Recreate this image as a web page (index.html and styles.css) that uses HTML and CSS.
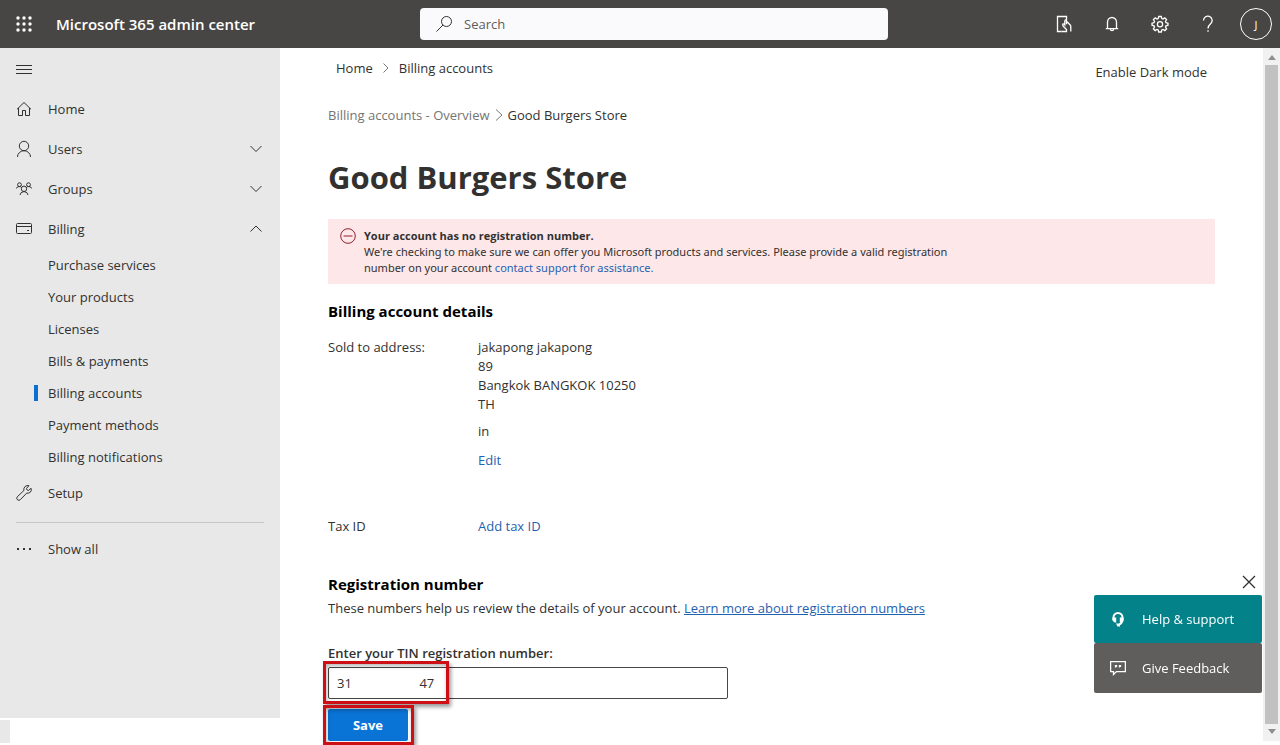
FILE: index.html
```html
<!DOCTYPE html>
<html lang="en">
<head>
<meta charset="utf-8">
<meta name="viewport" content="width=device-width, initial-scale=1">
<title>Good Burgers Store - Microsoft 365 admin center</title>
<link rel="stylesheet" href="styles.css">
</head>
<body>
<header class="topbar">
  <div class="brand">
    <button class="icon-button" aria-label="App launcher">
      <svg width="16" height="16" viewBox="0 0 16 16" fill="currentColor"><circle cx="2" cy="2" r="1.700"/><circle cx="8" cy="2" r="1.700"/><circle cx="14" cy="2" r="1.700"/><circle cx="2" cy="8" r="1.700"/><circle cx="8" cy="8" r="1.700"/><circle cx="14" cy="8" r="1.700"/><circle cx="2" cy="14" r="1.700"/><circle cx="8" cy="14" r="1.700"/><circle cx="14" cy="14" r="1.700"/></svg>
    </button>
    <a class="brand-name" href="#">Microsoft 365 admin center</a>
  </div>
  <label class="search">
    <svg width="16" height="16" viewBox="0 0 16 16" class="line"><circle cx="10.5" cy="5.5" r="5"/><path d="M7 9 0.5 15.5"/></svg>
    <input type="search" placeholder="Search" aria-label="Search">
  </label>
  <div class="tools">
    <button class="icon-button" aria-label="Setup guides">
      <svg width="16" height="18" viewBox="0 0 16 18" class="line bold"><path d="M5.500 16.500H1.500V1.500H10.500V5"/><path d="M5.500 16.500h5v-2L7.500 11.500Q6.300 10 6.800 9q1-.6 2 .8V6q.1-1.200.9-1.200t.8 1.200v3.200M10.500 6.200l3.500 3.500q.8.800.8 2V16.500"/></svg>
    </button>
    <button class="icon-button" aria-label="Notifications">
      <svg width="16" height="16" viewBox="0 0 16 16" class="line bold"><path d="M3.500 12.500V6a4.500 4.500 0 0 1 9 0v6.500M1.800 12.600h12.400M6.300 13q.2 1.700 1.700 1.700T9.700 13"/></svg>
    </button>
    <button class="icon-button" aria-label="Settings">
      <svg width="18" height="18" viewBox="0 0 18 18" class="line bold"><path d="M7.700 1.500h2.600l.5 2 1.200.5 1.800-1.100 1.800 1.800L14.500 6.500l.5 1.200 2 .5v2l-2 .6-.5 1.200 1.100 1.800-1.800 1.800-1.800-1.100-1.200.5-.5 2H7.700l-.5-2-1.200-.5-1.800 1.100-1.800-1.800L3.500 12 3 10.800l-2-.6v-2l2-.5.5-1.200L2.400 4.700l1.800-1.800L6 4l1.200-.5z"/><circle cx="9" cy="9.200" r="2.600"/></svg>
    </button>
    <button class="icon-button" aria-label="Help">
      <svg width="12" height="18" viewBox="0 0 12 18" class="line bold"><path d="M1.500 5.500a4.300 4.300 0 1 1 7.500 2.800Q6 11 6 13.500M6 15.300v1.500"/></svg>
    </button>
    <button class="icon-button" aria-label="Account manager"><span class="avatar">J</span></button>
  </div>
</header>

<div class="shell">
  <aside class="side">
    <nav class="nav" aria-label="Main">
      <button class="nav-item" aria-label="Collapse navigation"><svg width="16" height="16" viewBox="0 0 16 16" class="line"><path d="M0 4.500h16M0 8.500h16M0 12.500h16"/></svg></button>
      <a class="nav-item" href="#">
        <svg width="16" height="16" viewBox="0 0 16 16" class="line"><path d="M1 8.300 8 1.500l7 6.800M2.500 7v7.500h4v-5h3v5h4V7"/></svg>
        <span>Home</span></a>
      <button class="nav-item" aria-expanded="false">
        <svg width="16" height="18" viewBox="0 0 16 18" class="line"><circle cx="8" cy="6" r="4.700"/><path d="M1.500 17a6.500 6.300 0 0 1 13 0"/></svg>
        <span>Users</span>
        <svg class="chevron line" width="12" height="8" viewBox="0 0 12 8"><path d="M.5 1 6 6.500 11.500 1"/></svg></button>
      <button class="nav-item" aria-expanded="false">
        <svg width="16" height="14" viewBox="0 0 16 14" class="line"><circle cx="3.500" cy="2.700" r="1.900"/><circle cx="12.500" cy="2.700" r="1.900"/><circle cx="8" cy="6.800" r="2.700"/><path d="M.3 6.500q.5-2 3-2 1.700 0 2.300 1M15.700 6.500q-.5-2-3-2-1.700 0-2.300 1M4 13q.3-3.200 4-3.400 3.700.2 4 3.400"/></svg>
        <span>Groups</span>
        <svg class="chevron line" width="12" height="8" viewBox="0 0 12 8"><path d="M.5 1 6 6.500 11.500 1"/></svg></button>
      <button class="nav-item" aria-expanded="true">
        <svg width="16" height="14" viewBox="0 0 16 14" class="line"><rect x=".5" y="1.500" width="15" height="10" rx="1"/><path d="M.5 4.500h15M11 8.500h2"/></svg>
        <span>Billing</span>
        <svg class="chevron line" width="12" height="8" viewBox="0 0 12 8"><path d="M.5 6.500 6 1l5.500 5.500"/></svg></button>
      <a class="sub-item" href="#">Purchase services</a>
      <a class="sub-item" href="#">Your products</a>
      <a class="sub-item" href="#">Licenses</a>
      <a class="sub-item" href="#">Bills &amp; payments</a>
      <a class="sub-item current" href="#" aria-current="page">Billing accounts</a>
      <a class="sub-item" href="#">Payment methods</a>
      <a class="sub-item" href="#">Billing notifications</a>
      <a class="nav-item" href="#">
        <svg width="16" height="16" viewBox="0 0 16 16" class="line"><path d="M15 3.200q1 2.200-.6 3.900-1.500 1.500-3.700 1L4.500 14.500q-1.500 1.500-3 .3-1.600-1.400-.2-3L7.900 5.500Q7.300 3.200 9 1.600q1.600-1.500 4-.9L10.500 3.400l.6 1.600 1.500.5z"/></svg>
        <span>Setup</span></a>
      <hr class="divider">
      <button class="nav-item">
        <svg width="16" height="4" viewBox="0 0 16 4" fill="currentColor"><path d="M1 1h2v2H1zM7 1h2v2H7zM13 1h2v2h-2z"/></svg>
        <span>Show all</span></button>
    </nav>
    <div class="side-corner"></div>
  </aside>

  <main class="content">
    <div class="page-top">
      <nav class="crumbs" aria-label="Breadcrumb">
        <a href="#">Home</a>
        <svg width="6" height="10" viewBox="0 0 6 10" class="line"><path d="M.5.500 5 5 .5 9.500"/></svg>
        <a href="#">Billing accounts</a>
      </nav>
      <button class="dark-mode">Enable Dark mode</button>
    </div>
    <nav class="crumbs account-crumbs" aria-label="Billing account">
      <a class="faded" href="#">Billing accounts - Overview</a>
      <svg width="8" height="12" viewBox="0 0 8 12" class="line"><path d="M1 .5 7 6 1 11.500"/></svg>
      <span>Good Burgers Store</span>
    </nav>
    <h1>Good Burgers Store</h1>

    <section class="alert" role="alert">
      <svg width="16" height="16" viewBox="0 0 16 16" class="line"><circle cx="8" cy="8" r="7.300"/><path d="M3.500 8h9"/></svg>
      <div class="alert-text">
        <strong>Your account has no registration number.</strong>
        <p>We're checking to make sure we can offer you Microsoft products and services. Please provide a valid registration number on your account <a href="#">contact support for assistance.</a></p>
      </div>
    </section>

    <h2>Billing account details</h2>
    <dl class="details">
      <dt>Sold to address:</dt>
      <dd>
        <address>jakapong jakapong<br>89<br>Bangkok BANGKOK 10250<br>TH</address>
        <p>in</p>
        <a href="#">Edit</a>
      </dd>
      <dt>Tax ID</dt>
      <dd><a href="#">Add tax ID</a></dd>
    </dl>

    <h2>Registration number</h2>
    <p class="hint">These numbers help us review the details of your account. <a href="#">Learn more about registration numbers</a></p>

    <form class="tin-form">
      <label for="tin">Enter your TIN registration number:</label>
      <div class="field">
        <input id="tin" type="text" value="31&nbsp;&nbsp;&nbsp;&nbsp;&nbsp;&nbsp;&nbsp;&nbsp;&nbsp;&nbsp;&nbsp;&nbsp;&nbsp;&nbsp;&nbsp;&nbsp;&nbsp;&nbsp;&nbsp;&nbsp;47">
        <span class="mark mark-field"></span>
      </div>
      <div class="save-row">
        <button class="save" type="button">Save</button>
        <span class="mark mark-save"></span>
      </div>
    </form>
  </main>

  <div class="scrollbar" aria-hidden="true">
    <svg width="8" height="5" viewBox="0 0 8 5"><path d="M0 5 4 0l4 5z"/></svg>
    <div class="thumb"></div>
    <svg width="8" height="5" viewBox="0 0 8 5"><path d="M0 0h8L4 5z"/></svg>
  </div>
</div>

<aside class="assist" aria-label="Assistance">
  <button class="close" aria-label="Close"><svg width="14" height="14" viewBox="0 0 14 14" class="line bold"><path d="m1 1 12 12M13 1 1 13"/></svg></button>
  <button class="assist-button support">
    <svg width="16" height="16" viewBox="0 0 16 16"><path fill="none" stroke="currentColor" stroke-width="2" d="M3.500 9V6.500a4.500 4.500 0 0 1 9 0V9q0 2.500-3 4.500"/><path fill="currentColor" d="M2.500 6.500h3.700v5H4.500l-2-2zM9.800 6.500h3.700v3l-2 2H9.800zM6 12.500h4v3H7.500z"/></svg>
    <span>Help &amp; support</span></button>
  <button class="assist-button feedback">
    <svg width="16" height="16" viewBox="0 0 16 16" class="line bold"><path d="M.6 1.600h14.800v10H6.500L3.500 14.500v-2.900H.6z"/><path d="M5.500 5v2.500M6.500 5v2M9.500 5v2.500M10.500 5v2"/></svg>
    <span>Give Feedback</span></button>
</aside>
</body>
</html>
```
FILE: styles.css
```css
* { box-sizing: border-box; }

body {
  margin: 0;
  height: 100vh;
  display: flex;
  flex-direction: column;
  overflow: hidden;
  background: #fff;
  color: #323130;
  font: 13px/20px "Open Sans", "Noto Sans", sans-serif;
}

button, input { font: inherit; color: inherit; }
button { border: 0; padding: 0; background: none; text-align: left; cursor: pointer; }
a { color: inherit; text-decoration: none; }
h1, h2, p, dl, dd { margin: 0; }
svg { flex: none; display: block; }

.line { fill: none; stroke: currentColor; stroke-width: 1; }
.bold { stroke-width: 1.3; }

/* Top bar */
.topbar { flex: none; display: flex; align-items: center; height: 48px; background: #484644; color: #fff; }
.brand { flex: none; display: flex; align-items: center; width: 420px; }
.icon-button { display: flex; align-items: center; justify-content: center; width: 48px; height: 48px; }
.brand-name { padding-left: 8px; font-size: 15px; font-weight: 600; }
.search { flex: 0 1 468px; display: flex; align-items: center; gap: 12px; height: 32px; padding: 0 16px; border-radius: 4px; background: #faf9fb; color: #323130; }
.search input { flex: 1; min-width: 0; padding: 0; border: 0; outline: 0; background: none; }
.search input::placeholder { color: #605e5c; opacity: 1; }
.tools { flex: none; display: flex; margin-left: auto; }
.avatar { width: 32px; height: 32px; border: 1px solid #fff; border-radius: 50%; font-size: 11px; line-height: 32px; text-align: center; }

/* Frame under the top bar */
.shell { flex: 1; min-height: 0; display: flex; }
.side { flex: none; width: 280px; display: flex; flex-direction: column; gap: 2px; padding-bottom: 2px; }
.nav { flex: 1; padding-top: 1px; background: #e8e8e8; }
.side-corner { width: 10px; height: 23px; background: #e8e8e8; }

.nav-item { display: flex; align-items: center; gap: 16px; width: 100%; height: 40px; padding: 0 18px 0 16px; }
.chevron { margin-left: auto; }
.sub-item { display: flex; align-items: center; height: 32px; padding-left: 48px; }
.current::before { content: ""; width: 4px; height: 16px; margin: 0 10px 0 -14px; background: #0b6fd0; }
.divider { height: 1px; margin: 9px 16px 6px; border: 0; background: #c8c6c4; }

/* Page */
.content { flex: 1; min-width: 0; padding: 10px 48px 0 48px; overflow: hidden; }
.page-top { display: flex; align-items: flex-start; justify-content: space-between; padding: 0 8px; }
.dark-mode { margin-top: 4px; }
.crumbs { display: flex; align-items: center; gap: 10px; }
.account-crumbs { gap: 5px; margin-top: 23px; }
.faded { color: #767472; }
.crumbs svg { color: #797775; }

h1 { margin-top: 32px; font-size: 31px; line-height: 40px; font-weight: 700; }
h2 { font-size: 15px; line-height: 24px; font-weight: 700; color: #000; }

.alert { display: flex; gap: 8px; margin: 22px 0 15px; padding: 9px 12px 8px; background: #fde7e9; font-size: 11px; line-height: 16px; }
.alert svg { color: #8e1f2f; }
.alert-text { max-width: 620px; }
.alert p { font-family: "Noto Sans", sans-serif; }
.alert strong { display: block; }
.alert a, .details a, .hint a { color: #1f62b0; }

.details { display: grid; grid-template-columns: 150px 1fr; row-gap: 47px; margin: 15px 0 36px; line-height: 19px; }
.details address { font-style: normal; }
.details p { margin: 8px 0 10px; }
.details a { display: inline-block; }

.hint { margin-top: 3px; line-height: 19px; }
.hint a { text-decoration: underline; }

.tin-form { margin-top: 26px; }
.tin-form label { display: block; line-height: 19px; font-weight: 600; }
.field { position: relative; max-width: 400px; margin-top: 4px; }
.field input { display: block; width: 100%; height: 32px; padding: 0 8px; border: 1px solid #484644; border-radius: 2px; background: #fff; }
.save-row { position: relative; margin-top: 10px; }
.save { display: block; width: 80px; height: 32px; border-radius: 2px; background: #0a74d6; color: #fff; font-weight: 700; text-align: center; }

/* Red callout frames drawn over the form */
.mark { position: absolute; border: 3px solid #cc1016; pointer-events: none; box-shadow: 2px 3px 4px rgba(0, 0, 0, .4), inset 1px 2px 4px rgba(0, 0, 0, .3); }
.mark-field { left: -5px; top: -6px; width: 126px; height: 43px; }
.mark-save { left: -5px; top: -4px; width: 91px; height: 40px; }

/* Scrollbar */
.scrollbar { flex: none; width: 17px; margin-bottom: 4px; padding: 7px 0; display: flex; flex-direction: column; align-items: center; gap: 5px; background: #f1f1f1; fill: #8f8f8f; }
.thumb { flex: 1; width: 13px; background: #c1c1c1; }

/* Floating assistance buttons */
.assist { position: fixed; right: 18px; bottom: 52px; display: flex; flex-direction: column; width: 168px; }
.close { align-self: flex-end; padding: 6px; }
.assist-button { display: flex; align-items: center; gap: 16px; height: 48px; padding: 0 16px; border-radius: 2px; color: #fff; }
.support { background: #03828a; }
.feedback { height: 50px; background: #605e5c; }
```
